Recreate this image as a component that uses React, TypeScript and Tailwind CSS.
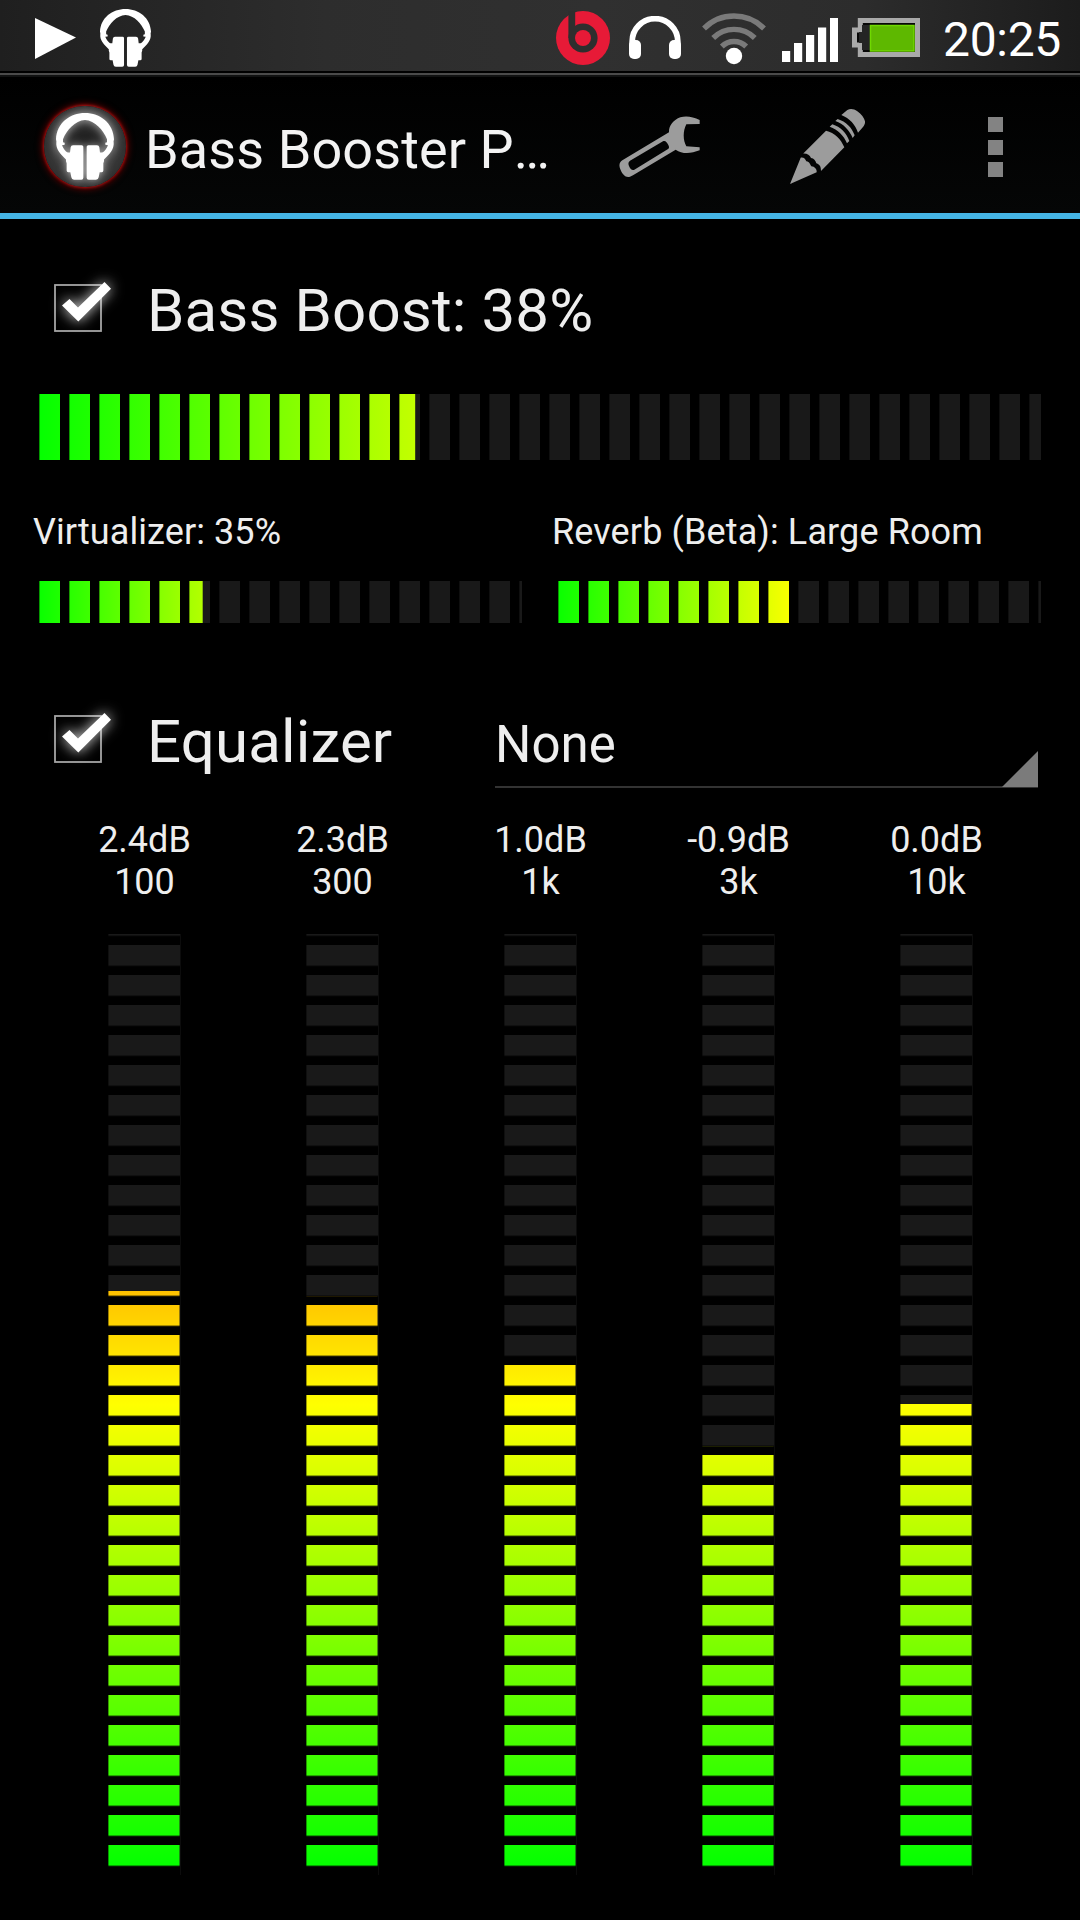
import React, { useState } from 'react';

const bands = [
  { gain: '2.4dB', freq: '100', level: 584 },
  { gain: '2.3dB', freq: '300', level: 579 },
  { gain: '1.0dB', freq: '1k', level: 514 },
  { gain: '-0.9dB', freq: '3k', level: 429 },
  { gain: '0.0dB', freq: '10k', level: 471 },
];

const HeadphonesLogo = ({ className }: { className?: string }) => (
  <svg viewBox="0 0 174 200" preserveAspectRatio="none" fill="#fff" className={className}>
    <path d="M0 78C2 30 42 0 87 0s85 30 87 78c0 4-2 5-1 10 1 9-2 18-7 26-6 9-14 17-22 25l-5-20c8-7 13-13 17-23l-8-1v-6l5-2v-9C142 52 117 22 87 21 57 22 32 52 21 78v9l5 2v6l-8 1c4 10 9 16 17 23l-5 20c-8-8-16-16-22-25-5-8-8-17-7-26 1-5-1-6-1-10z" />
    <path d="M53 96h24q5 0 5 5v92q0 6-6 6H54q-7 0-8-7l-3-15h-6q-5 0-5-5v-22l-2-6v-22q0-4 4-4h8l2-16q1-6 7-6z" />
    <path d="M121 96H97q-5 0-5 5v92q0 6 6 6h22q7 0 8-7l3-15h6q5 0 5-5v-22l2-6v-22q0-4-4-4h-8l-2-16q-1-6-7-6z" />
  </svg>
);

const StatusBar = () => (
  <div>
    <div className="flex h-[71px] items-start bg-[linear-gradient(to_right,#1f1f1f,#2d2d2d_30%,#303030_55%,#2c2c2c_80%,#1c1c1c)]">
      <svg width="41" height="41" viewBox="0 0 41 41" className="mt-[18px] ml-[35px]">
        <path d="M0 0L41 19.5 0 41z" fill="#fff" />
      </svg>
      <HeadphonesLogo className="mt-[9px] ml-[24px] h-[58px] w-[51px]" />

      {/* Beats */}
      <svg width="54" height="54" viewBox="0 0 54 54" className="mt-[11px] ml-auto">
        <circle cx="27" cy="27" r="27" fill="#e71a37" />
        <circle cx="27" cy="27" r="14.6" fill="#2e2e2e" />
        <path d="M12.4 0h6.8v27h-6.8z" fill="#2e2e2e" />
        <circle cx="27" cy="27" r="8" fill="#e71a37" />
      </svg>
      <svg width="52" height="44" viewBox="0 0 52 44" className="mt-[16px] ml-[19px]">
        <path d="M3.2 32V25.5a22.8 22.8 0 0 1 45.6 0V32" fill="none" stroke="#fff" strokeWidth="5.8" />
        <rect x="0" y="24" width="12" height="19" rx="5" fill="#fff" />
        <rect x="40" y="24" width="12" height="19" rx="5" fill="#fff" />
      </svg>
      <svg width="66" height="54" viewBox="0 0 66 54" className="mt-[11px] ml-[20px]">
        <g fill="none" stroke="#7a7a7a" strokeWidth="5.4">
          <path d="M3 17.5a42.3 42.3 0 0 1 60 0" />
          <path d="M12.2 27a29.4 29.4 0 0 1 41.6 0" />
          <path d="M20.8 35.5a17.3 17.3 0 0 1 24.4 0" />
        </g>
        <circle cx="33" cy="45" r="8.2" fill="#fff" />
      </svg>
      <svg width="56" height="44" viewBox="0 0 56 44" fill="#fff" className="mt-[18px] ml-[15px]">
        <rect x="0" y="33" width="8.2" height="11" />
        <rect x="12" y="25" width="8.2" height="19" />
        <rect x="24" y="17" width="8.2" height="27" />
        <rect x="36" y="9.5" width="8.2" height="34.5" />
        <rect x="48" y="0" width="8.2" height="44" />
      </svg>
      <svg width="68" height="39" viewBox="0 0 68 39" className="mt-[18px] ml-[14px]">
        <path d="M8.3 2.5H65.5v34H8.3V27H2.5V12h5.8z" fill="#070707" stroke="#a9a9a9" strokeWidth="5" />
        <path d="M10 7h9v25h-9v-7H7v-11h3z" fill="#242424" />
        <rect x="18.5" y="7.5" width="43.5" height="25.5" fill="#5eb800" stroke="#70d800" strokeWidth="1.5" />
      </svg>
      <div className="mt-[10px] mr-[19px] ml-[23px] w-[118px] text-[48px] leading-[60px] tracking-[-0.3px] whitespace-nowrap text-white">20:25</div>
    </div>
    <div className="h-[2px] bg-black" />
    <div className="h-[2px] bg-[#4a4a4a]" />
    <div className="h-[2px] bg-[#101111]" />
  </div>
);

const ActionBar = () => (
  <div className="flex h-[142px] items-center border-b-[6px] border-[#45b5e5] bg-[linear-gradient(#000,#050606)]">
    <div className="mt-[3px] ml-[44px] flex h-[81px] w-[82px] shrink-0 items-center justify-center rounded-full bg-[radial-gradient(circle,#1c1c1c_10%,#383838_55%,#222_100%)] shadow-[0_0_3px_1px_#a80c0c,0_0_7px_2px_#600]">
      <HeadphonesLogo className="h-[67px] w-[58px] drop-shadow-[0_0_5px_rgba(255,255,255,0.65)]" />
    </div>
    <h1 className="mt-[9px] ml-[19px] w-[420px] text-[54px] leading-[64px] tracking-[0.1px] whitespace-nowrap text-[#f3f3f3]">
      Bass Booster P<span className="inline-block">…</span>
    </h1>

    {/* Settings */}
    <svg width="82" height="62" viewBox="0 0 246 186" className="mt-[4px] ml-[54px]">
      <path
        fill="#9c9c9c"
        fillRule="evenodd"
        d="M242 12C222 2 201-2 184 4c-21 8-35 25-34 45L10 133c-9 6-11 15-6 27 6 15 15 25 26 23 4 0 8-3 12-5l128-77c20 14 46 12 72 2V94l-40-3c-10-18-11-44 0-66l40-1zM132 76L33 134c-5 4-6 9-3 16 4 9 9 14 16 11l100-61c5-4 5-7 2-13-4-8-9-14-16-11z"
      />
    </svg>
    {/* Presets */}
    <svg width="76" height="77" viewBox="0 0 228 231" fill="#9c9c9c" className="mt-[3px] ml-[89px]">
      <path d="M0 228L32 149c11-1 13 4 17 11 10 2 11 9 15 15 10 1 17 8 16 18z" />
      <path d="M39 137l69-69c26 6 45 25 55 50l-70 71c0-12-3-19-14-23-3-9-7-15-16-16-4-9-12-14-24-13z" />
      <path d="M119 56l8-7c25 8 42 26 51 50l-7 7c-10-24-27-41-52-50z" />
      <path d="M136 39l7-6c25 8 42 25 51 49l-6 8c-10-24-27-42-52-51z" />
      <path d="M154 21l18-15c10-5 20-3 30 4 12 8 21 20 23 30 1 7-2 12-6 17l-15 17c-8-24-25-43-50-53z" />
    </svg>
    <div className="mt-[4px] ml-[122px] flex flex-col gap-[7.5px]">
      <span className="h-[15px] w-[15px] bg-[#838383]" />
      <span className="h-[15px] w-[15px] bg-[#838383]" />
      <span className="h-[15px] w-[15px] bg-[#838383]" />
    </div>
  </div>
);

const Checkbox = ({ checked, onChange }: { checked: boolean; onChange: () => void }) => (
  <button type="button" role="checkbox" aria-checked={checked} onClick={onChange} className="h-[48px] w-[48px] shrink-0">
    <svg width="48" height="48" viewBox="0 0 48 48" className="overflow-visible">
      <rect x="1" y="1" width="46" height="46" fill="#000" stroke="#a5a5a5" strokeWidth="1.8" />
      {checked && (
        <path
          d="M8 21.5L15.5 15 24 23.5 50.5-2 57 4.8 24.3 37.5z"
          fill="#fff"
          className="drop-shadow-[0_0_7px_rgba(255,255,255,0.9)]"
        />
      )}
    </svg>
  </button>
);

const HorizontalMeter = ({ fill, className }: { fill: number; className: string }) => (
  <div className={`bg-[#191919] mask-[repeating-linear-gradient(to_right,transparent_0_9px,rgba(0,0,0,0.6)_9px_10px,black_10px_30px)] ${className}`}>
    <div
      className="h-full bg-[linear-gradient(to_right,#0f0,#ff0_50%,#f00)]"
      style={{ clipPath: `inset(0 ${100 - fill}% 0 0)` }}
    />
  </div>
);

const VerticalMeter = ({ level }: { level: number }) => (
  <div className="flex h-[941px] w-[73px] border-r border-[#0c0c0c]">
    <div className="relative w-[72px] bg-[#191919] mask-[repeating-linear-gradient(to_top,transparent_0_8px,rgba(0,0,0,0.12)_8px_9px,rgba(0,0,0,0.65)_9px_10px,black_10px_30px)]">
      <div
        className="h-full bg-[linear-gradient(to_top,#0f0,#ff0_50%,#f00)]"
        style={{ clipPath: `inset(${941 - level}px 0 0 0)` }}
      />
      <div className="absolute inset-y-0 left-0 w-px bg-black/40" />
    </div>
  </div>
);

const App = () => {
  const [bassOn, setBassOn] = useState(true);
  const [eqOn, setEqOn] = useState(true);

  return (
    <div className="h-[1920px] w-[1080px] overflow-hidden bg-black font-[Roboto,sans-serif] text-[#eee]">
      <StatusBar />
      <ActionBar />

      <main>
        <div className="mt-[49px] flex h-[80px] items-center pl-[54px]">
          <Checkbox checked={bassOn} onChange={() => setBassOn(!bassOn)} />
          <span className="mt-[5px] ml-[45px] text-[60px] leading-[70px] tracking-[0.15px] whitespace-nowrap">Bass Boost: 38%</span>
        </div>
        <HorizontalMeter fill={38.1} className="mt-[46px] ml-[30px] h-[66px] w-[1011px]" />

        <div className="mt-[51px] flex gap-[27px] pl-[30px]">
          <div className="w-[492px]">
            <div className="pl-[3px] text-[36px] leading-[42px] tracking-[0.08px] whitespace-nowrap">Virtualizer: 35%</div>
            <HorizontalMeter fill={35.1} className="mt-[28px] h-[42px]" />
          </div>
          <div className="w-[492px]">
            <div className="pl-[3px] text-[36px] leading-[42px] tracking-[0.12px] whitespace-nowrap">Reverb (Beta): Large Room</div>
            <HorizontalMeter fill={50} className="mt-[28px] h-[42px]" />
          </div>
        </div>

        <div className="mt-[68px] flex h-[97px] pl-[54px]">
          <div className="flex h-[96px] w-[441px] items-center">
            <Checkbox checked={eqOn} onChange={() => setEqOn(!eqOn)} />
            <span className="mt-[5px] ml-[45px] text-[60px] leading-[70px] tracking-[0.15px] whitespace-nowrap">Equalizer</span>
          </div>
          <div className="flex w-[543px] items-end justify-between border-b-2 border-[#333]">
            <span className="mb-[11px] text-[51px] leading-[60px]">None</span>
            <svg width="36" height="36" viewBox="0 0 36 36" className="-mb-px">
              <path d="M36 0v36H0z" fill="#7b7b7b" />
            </svg>
          </div>
        </div>

        <div className="mt-[31px] ml-[45px] flex">
          {bands.map((band) => (
            <div key={band.freq} className="flex w-[198px] flex-col items-center text-[36px] leading-[42px]">
              <div className="pl-px">{band.gain}</div>
              <div className="mb-[31px] pl-px">{band.freq}</div>
              <VerticalMeter level={band.level} />
            </div>
          ))}
        </div>
      </main>
    </div>
  );
};

export default App;
